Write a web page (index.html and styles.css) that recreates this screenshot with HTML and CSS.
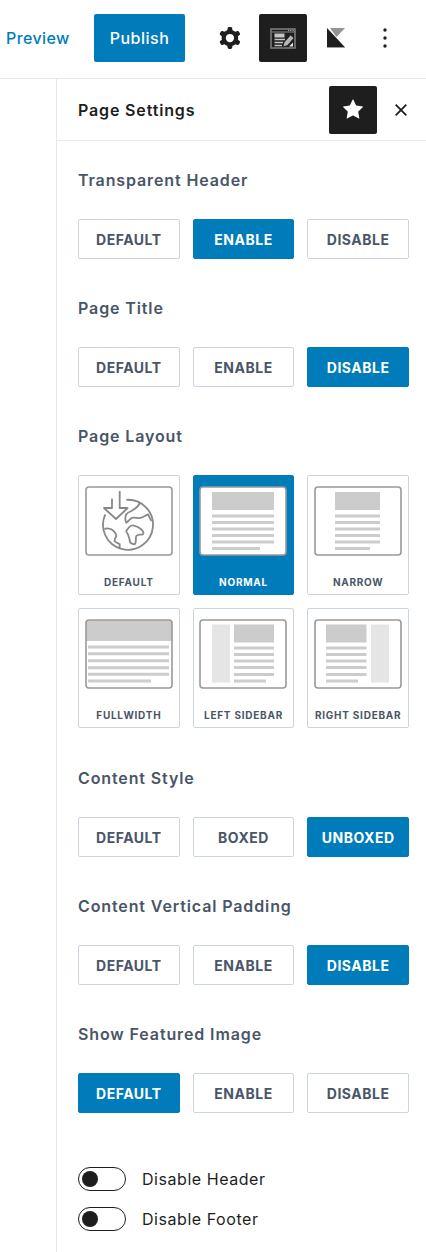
FILE: index.html
```html
<!DOCTYPE html>
<html lang="en">
<head>
  <meta charset="UTF-8">
  <title>Page Settings</title>
  <link rel="stylesheet" href="styles.css">
</head>
<body>
  <header class="topbar">
    <a class="preview-link">Preview</a>
    <button class="publish-btn">Publish</button>
    <button class="icon-btn gear-btn">
      <svg width="22" height="22" viewBox="4 4 16 16"><path fill="#1e1e1e" fill-rule="evenodd" d="M10.289 4.836A1 1 0 0111.275 4h1.306a1 1 0 01.987.836l.244 1.466c.787.26 1.503.679 2.108 1.218l1.393-.522a1 1 0 011.216.437l.653 1.13a1 1 0 01-.23 1.273l-1.148.944a6.025 6.025 0 010 2.435l1.149.946a1 1 0 01.23 1.272l-.653 1.13a1 1 0 01-1.216.437l-1.394-.522c-.605.54-1.32.958-2.108 1.218l-.244 1.466a1 1 0 01-.987.836h-1.306a1 1 0 01-.986-.836l-.244-1.466a5.995 5.995 0 01-2.108-1.218l-1.394.522a1 1 0 01-1.217-.436l-.653-1.131a1 1 0 01.23-1.272l1.149-.946a6.026 6.026 0 010-2.435l-1.148-.944a1 1 0 01-.23-1.272l.653-1.131a1 1 0 011.217-.437l1.393.522a5.994 5.994 0 012.108-1.218l.244-1.466zM14.929 12a3 3 0 11-6 0 3 3 0 016 0z"/></svg>
    </button>
    <button class="icon-btn dark-btn template-btn">
      <svg width="26" height="21" viewBox="0 0 26 21">
        <rect x="1" y="1" width="24" height="19" fill="none" stroke="#7a7a7a" stroke-width="1.600"/>
        <path d="M1 4H25" stroke="#7a7a7a" stroke-width="1.200"/>
        <path d="M18 2.400H24" stroke="#bbb" stroke-width="1" stroke-dasharray="1.200 1"/>
        <rect x="4.500" y="5.500" width="10" height="4" fill="#c4c4c4"/>
        <path d="M4.500 11.500H15M4.500 14.500H13M4.500 17.500H12" stroke="#c4c4c4" stroke-width="1.400"/>
        <path d="M13 19l1-4.500 6.500-7.500 3.500 3-6.500 7.500z" fill="#b5b5b5" stroke="#1e1e1e" stroke-width="0.800"/>
        <path d="M23 14.500V18.500H19z" fill="#e6e6e6"/>
      </svg>
    </button>
    <button class="icon-btn kadence-btn">
      <svg width="18" height="20" viewBox="0 0 18 20">
        <path d="M3 0H18L9.500 9z" fill="#949494"/>
        <path d="M0 0L18 19.200H0z" fill="#1e1e1e"/>
        <path d="M0 19.200H18V20H0z" fill="#949494"/>
      </svg>
    </button>
    <button class="icon-btn dots-btn">
      <svg width="4" height="20" viewBox="0 0 4 20"><circle cx="2" cy="2" r="1.700" fill="#1e1e1e"/><circle cx="2" cy="10" r="1.700" fill="#1e1e1e"/><circle cx="2" cy="18" r="1.700" fill="#1e1e1e"/></svg>
    </button>
  </header>

  <aside class="panel">
    <div class="panel-head">
      <h2>Page Settings</h2>
      <button class="icon-btn dark-btn star-btn">
        <svg width="22" height="22" viewBox="4 4 16 16"><path fill="#fff" d="M11.776 4.454a.25.25 0 01.448 0l2.069 4.192a.25.25 0 00.188.137l4.626.672a.25.25 0 01.139.426l-3.348 3.263a.25.25 0 00-.072.222l.79 4.607a.25.25 0 01-.362.263l-4.138-2.175a.25.25 0 00-.232 0l-4.138 2.175a.25.25 0 01-.363-.263l.79-4.607a.25.25 0 00-.071-.222L4.754 9.881a.25.25 0 01.139-.426l4.626-.672a.25.25 0 00.188-.137l2.069-4.192z"/></svg>
      </button>
      <button class="icon-btn close-btn">
        <svg width="12" height="12" viewBox="0 0 12 12"><path d="M.7.7l10.600 10.600M11.300.7L.7 11.300" stroke="#1e1e1e" stroke-width="1.800" fill="none"/></svg>
      </button>
    </div>

    <div class="panel-body">
      <section class="setting">
        <h3>Transparent Header</h3>
        <div class="options">
          <button class="opt">Default</button>
          <button class="opt active">Enable</button>
          <button class="opt">Disable</button>
        </div>
      </section>

      <section class="setting">
        <h3>Page Title</h3>
        <div class="options">
          <button class="opt">Default</button>
          <button class="opt">Enable</button>
          <button class="opt active">Disable</button>
        </div>
      </section>

      <section class="setting layout-setting">
        <h3>Page Layout</h3>
        <div class="options">
          <button class="tile">
            <svg width="88" height="70" viewBox="0 0 88 70">
              <rect class="frame" x="1" y="1" width="86" height="68" rx="3"/>
              <g class="globe">
                <path d="M27 12.700V22H19L31 33 42.600 22H34.700V5"/>
                <path d="M41.300 13.800A25 25 0 1 1 20.300 28.300"/>
                <path d="M54.700 16.500C54 21 50 23 46.300 25 44 26 42 27 41.300 28.300 40 31 40 34 41.300 36.700 44 35 45 32 48 31.700 51 31 53 33 56.300 31.700 59 31 61 29 63 28.300 64 30 65 33 66.500 35"/>
                <path d="M41.300 45C43 42 45 39 48 39.300 51 40 54 41 56.300 43.300 58 45 59 47 58 48.300 55 49 53 48 51.300 50 50 53 52 56 49.700 58.300 47 58 45 57 44.700 55 45 52 43 50 43 48.300 42 47 41 46 41.300 45z"/>
                <path d="M19.500 43.300C22 41 24 43 26.300 43.300 29 45 31 47 31.300 50 31 52 29 53 29.700 55 31 57 33 57 34.700 58.300 35 60 34 62 34.700 63"/>
              </g>
            </svg>
            <span>Default</span>
          </button>
          <button class="tile active">
            <svg width="88" height="70" viewBox="0 0 88 70">
              <rect class="frame light" x="1" y="1" width="86" height="68" rx="3"/>
              <rect class="block" x="13" y="6" width="62" height="18"/>
              <path class="lines" d="M13 30H75M13 36.500H75M13 43H75M13 49.500H75M13 56H75M13 62.500H61"/>
            </svg>
            <span>Normal</span>
          </button>
          <button class="tile">
            <svg width="88" height="70" viewBox="0 0 88 70">
              <rect class="frame" x="1" y="1" width="86" height="68" rx="3"/>
              <rect class="block" x="21" y="6" width="45" height="18"/>
              <path class="lines" d="M21 30H66M21 36.500H66M21 43H66M21 49.500H66M21 56H66M21 62.500H56"/>
            </svg>
            <span>Narrow</span>
          </button>
          <button class="tile">
            <svg width="88" height="70" viewBox="0 0 88 70">
              <path class="block" d="M1 4a3 3 0 0 1 3-3H84a3 3 0 0 1 3 3V22H1z"/>
              <rect class="frame" x="1" y="1" width="86" height="68" rx="3"/>
              <path class="lines" d="M3 28H84M3 34.700H84M3 41.700H84M3 48.700H84M3 55.300H84M3 62H66"/>
            </svg>
            <span>Fullwidth</span>
          </button>
          <button class="tile">
            <svg width="88" height="70" viewBox="0 0 88 70">
              <rect class="frame" x="1" y="1" width="86" height="68" rx="3"/>
              <rect class="side" x="13" y="5.500" width="18" height="58"/>
              <rect class="block" x="35" y="5.500" width="40" height="18"/>
              <path class="lines" d="M35 29H75M35 35.500H75M35 42H75M35 48.500H75M35 55.500H75M35 62H67"/>
            </svg>
            <span>Left Sidebar</span>
          </button>
          <button class="tile">
            <svg width="88" height="70" viewBox="0 0 88 70">
              <rect class="frame" x="1" y="1" width="86" height="68" rx="3"/>
              <rect class="block" x="12" y="5.500" width="40.500" height="18"/>
              <rect class="side" x="57" y="5.500" width="18" height="58"/>
              <path class="lines" d="M12 29H52.500M12 35.500H52.500M12 42H52.500M12 48.500H52.500M12 55.500H52.500M12 62H44"/>
            </svg>
            <span>Right Sidebar</span>
          </button>
        </div>
      </section>

      <section class="setting">
        <h3>Content Style</h3>
        <div class="options">
          <button class="opt">Default</button>
          <button class="opt">Boxed</button>
          <button class="opt active">Unboxed</button>
        </div>
      </section>

      <section class="setting">
        <h3>Content Vertical Padding</h3>
        <div class="options">
          <button class="opt">Default</button>
          <button class="opt">Enable</button>
          <button class="opt active">Disable</button>
        </div>
      </section>

      <section class="setting">
        <h3>Show Featured Image</h3>
        <div class="options">
          <button class="opt active">Default</button>
          <button class="opt">Enable</button>
          <button class="opt">Disable</button>
        </div>
      </section>

      <div class="toggles">
        <label class="toggle"><span class="switch"><span class="knob"></span></span>Disable Header</label>
        <label class="toggle"><span class="switch"><span class="knob"></span></span>Disable Footer</label>
      </div>
    </div>
  </aside>
</body>
</html>
```

FILE: styles.css
```css
* {
  box-sizing: border-box;
}

body {
  margin: 0;
  height: 100vh;
  overflow: hidden;
  display: flex;
  flex-direction: column;
  background: #fff;
  color: #1e1e1e;
  font-family: Inter, "Liberation Sans", sans-serif;
}

button {
  font-family: inherit;
  padding: 0;
  border: none;
  background: none;
  cursor: pointer;
}

.topbar {
  height: 79px;
  flex: none;
  display: flex;
  align-items: center;
  padding: 0 0 2px 6px;
  border-bottom: 1px solid #e9e9e9;
}

.preview-link {
  width: 64px;
  color: #007cba;
  font-size: 16px;
  font-weight: 500;
  letter-spacing: 0.4px;
}

.publish-btn {
  width: 91px;
  height: 48px;
  margin-left: 24px;
  border-radius: 2px;
  background: #007cba;
  color: #fff;
  font-size: 16px;
  font-weight: 500;
  letter-spacing: 0.5px;
}

.icon-btn {
  display: flex;
  align-items: center;
  justify-content: center;
  flex: none;
  width: 48px;
  height: 48px;
  border-radius: 2px;
}

.dark-btn {
  background: #1e1e1e;
}

.gear-btn {
  margin-left: 21px;
}

.template-btn {
  margin-left: 5px;
}

.kadence-btn {
  margin-left: 5px;
}

.dots-btn {
  margin-left: 1px;
}

.panel {
  flex: 1;
  margin-left: 56px;
  border-left: 1px solid #e9e9e9;
}

.panel-head {
  height: 62px;
  display: flex;
  align-items: center;
  padding: 0 1px 0 21px;
  border-bottom: 1px solid #e9e9e9;
}

.panel-head h2 {
  flex: 1;
  margin: 0;
  font-size: 16px;
  font-weight: 600;
  letter-spacing: 0.85px;
}

.panel-body {
  padding: 29px 17px 0 21px;
}

.setting {
  margin-bottom: 39px;
}

.layout-setting {
  margin-bottom: 40px;
}

.setting h3 {
  margin: 0 0 28px;
  height: 21px;
  color: #4a5568;
  font-size: 16px;
  font-weight: 600;
  letter-spacing: 0.88px;
  line-height: 21px;
}

.options {
  display: grid;
  grid-template-columns: repeat(3, 1fr);
  gap: 13px;
}

.opt {
  height: 40px;
  border: 1px solid #cbd5e0;
  border-radius: 2px;
  background: #fff;
  color: #4a5568;
  font-size: 14px;
  font-weight: 700;
  letter-spacing: 0.5px;
  text-transform: uppercase;
}

.opt.active,
.tile.active {
  border-color: #007cba;
  background: #007cba;
  color: #fff;
}

.tile {
  height: 120px;
  display: flex;
  flex-direction: column;
  align-items: center;
  padding-top: 10px;
  border: 1px solid #cbd5e0;
  border-radius: 2px;
  background: #fff;
  color: #4a5568;
  font-size: 10px;
  font-weight: 700;
  letter-spacing: 0.75px;
  text-transform: uppercase;
}

.tile span {
  margin-top: 19px;
  line-height: 14px;
  white-space: nowrap;
}

.frame {
  fill: none;
  stroke: #999;
  stroke-width: 1.6;
}

.frame.light {
  fill: #fff;
}

.block {
  fill: #ccc;
}

.side {
  fill: #e5e5e5;
}

.lines {
  fill: none;
  stroke: #ccc;
  stroke-width: 3;
}

.globe path {
  fill: none;
  stroke: #888;
  stroke-width: 1.8;
  stroke-linejoin: round;
}

.toggles {
  display: flex;
  flex-direction: column;
  gap: 16px;
  margin-top: 54px;
}

.toggle {
  display: flex;
  align-items: center;
  gap: 16px;
  height: 24px;
  font-size: 16px;
  letter-spacing: 0.55px;
}

.switch {
  display: flex;
  align-items: center;
  width: 48px;
  height: 24px;
  padding-left: 3px;
  border: 1px solid #1e1e1e;
  border-radius: 12px;
}

.knob {
  width: 16px;
  height: 16px;
  border-radius: 50%;
  background: #1e1e1e;
}
```
